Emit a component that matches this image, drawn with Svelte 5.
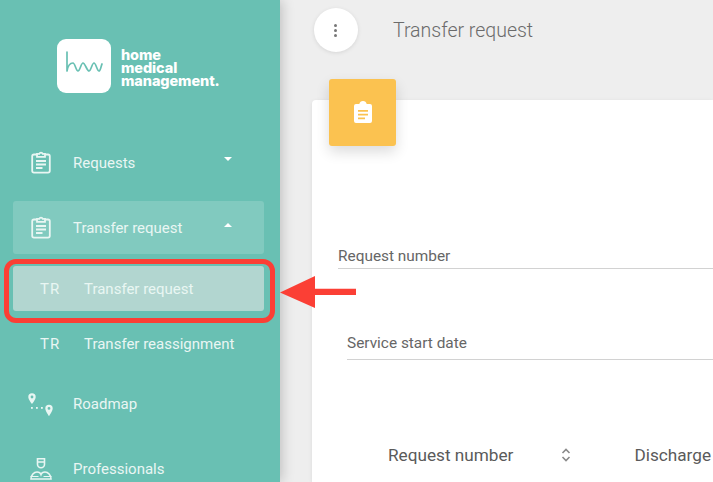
<script>
	const clipboard = 'M6 3.500H3A1.800 1.800 0 0 0 1.200 5.300v14.500A1.800 1.800 0 0 0 3 21.600h14a1.800 1.800 0 0 0 1.800-1.800V5.300A1.800 1.800 0 0 0 17 3.500h-3M6 2.800h2.300a1.800 1.800 0 0 1 3.400 0H14v3H6zM5 10h10M5 13.500h10M5 17h6.500';
</script>

<div class="page">
	<aside class="sidebar">
		<div class="brand">
			<div class="brand-mark">
				<svg width="40" height="30" viewBox="0 0 40 30" fill="none" stroke="#69c0b3" stroke-width="1.700" stroke-linecap="round" stroke-linejoin="round">
					<path d="M3 1v19C4 14 7 12 9 12c2 0 3 8 5 8s3-8 5-8 4 8 6 8 3-8 5-8 3 8 5 8c1.500 0 2-5 3-7" />
				</svg>
			</div>
			<div class="brand-name">home<br />medical<br />management.</div>
		</div>

		<nav class="menu">
			<div class="item item-requests">
				<span class="icon">
					<svg width="20" height="23" viewBox="0 0 20 23" fill="none" stroke="currentColor" stroke-width="1.800"><path d={clipboard} /></svg>
				</span>
				<span class="label">Requests</span>
				<span class="caret down"></span>
			</div>

			<div class="item open">
				<span class="icon">
					<svg width="20" height="23" viewBox="0 0 20 23" fill="none" stroke="currentColor" stroke-width="1.800"><path d={clipboard} /></svg>
				</span>
				<span class="label">Transfer request</span>
				<span class="caret up"></span>
			</div>

			<div class="sub active"><span class="abbr">TR</span><span>Transfer request</span></div>
			<div class="sub second"><span class="abbr">TR</span><span>Transfer reassignment</span></div>

			<div class="item item-roadmap">
				<span class="icon">
					<svg width="26" height="26" viewBox="0 0 26 26" fill="currentColor">
						<path fill-rule="evenodd" d="M4 2.300A3.700 3.700 0 0 1 7.700 6C7.700 8.500 4 13 4 13S.3 8.500.3 6A3.700 3.700 0 0 1 4 2.300zm0 2.300a1.400 1.400 0 1 0 0 2.800 1.400 1.400 0 0 0 0-2.800z" />
						<path fill-rule="evenodd" d="M21 13.700a3.700 3.700 0 0 1 3.700 3.700C24.700 19.900 21 25 21 25s-3.700-5.100-3.700-7.600A3.700 3.700 0 0 1 21 13.700zm0 2.300a1.400 1.400 0 1 0 0 2.800 1.400 1.400 0 0 0 0-2.800z" />
						<rect x="3" y="16" width="1.800" height="1.800" /><rect x="8" y="16" width="1.800" height="1.800" /><rect x="13" y="16" width="1.800" height="1.800" />
					</svg>
				</span>
				<span class="label">Roadmap</span>
			</div>

			<div class="item item-pros">
				<span class="icon">
					<svg width="26" height="26" viewBox="0 0 26 26" fill="none" stroke="currentColor" stroke-width="1.600">
						<path d="M9.500 2.800h7v5.400a3.500 3.500 0 0 1-7 0zM9.500 6h7" />
						<path d="M3 23c0-4 3-7 6-7 2 0 3.500 1 4 2.500.5-1.500 2-2.500 4-2.500 3 0 6 3 6 7z" />
						<path d="M2.500 20.500h8M15.500 20.500h8" stroke-width="1.200" />
					</svg>
				</span>
				<span class="label">Professionals</span>
			</div>
		</nav>
	</aside>

	<main class="main">
		<header class="topbar">
			<div class="more"><i></i><i></i><i></i></div>
			<h1>Transfer request</h1>
		</header>

		<section class="card">
			<div class="tile">
				<svg width="20" height="23" viewBox="0 0 20 23" fill="#fff">
					<path fill-rule="evenodd" d="M3 3h3.300a3.800 3.800 0 0 1 7.400 0H17a2 2 0 0 1 2 2v15a2 2 0 0 1-2 2H3a2 2 0 0 1-2-2V5a2 2 0 0 1 2-2zM5 9v1.800h10V9zm0 3.700v1.800h10v-1.800zm0 3.700v1.800h7v-1.800z" />
				</svg>
			</div>

			<div class="field field-request">Request number</div>
			<div class="field field-date">Service start date</div>

			<div class="thead">
				<span class="col-request">Request number</span>
				<svg class="sort" width="10" height="16" viewBox="0 0 10 16" fill="none" stroke="#8a8a8a" stroke-width="1.600"><path d="M1.500 6 5 2.500 8.500 6M1.500 10 5 13.500 8.500 10" /></svg>
				<span class="col-discharge">Discharge</span>
			</div>
		</section>
	</main>

	<!-- annotation drawn over the screenshot -->
	<div class="callout"></div>
	<svg class="arrow" width="76" height="32" viewBox="0 0 76 32">
		<path d="M0 16.500 35 0v12.700h41V19H35v13z" fill="#fb3f35" />
	</svg>
</div>

<style>
	:global(body) {
		margin: 0;
	}

	.page {
		position: relative;
		display: flex;
		width: 713px;
		height: 482px;
		overflow: hidden;
		background: #eeeeee;
		font-family: Roboto, "Liberation Sans", sans-serif;
	}

	/* Sidebar */
	.sidebar {
		flex: 0 0 280px;
		padding-top: 39px;
		box-sizing: border-box;
		background: #69c0b3;
		color: #e9f6f3;
		box-shadow: 2px 0 12px rgba(0, 0, 0, 0.2);
		z-index: 1;
	}

	.brand {
		display: flex;
		align-items: center;
		gap: 10px;
		padding-left: 57px;
	}

	.brand-mark {
		display: flex;
		align-items: center;
		justify-content: center;
		width: 54px;
		height: 54px;
		border-radius: 9px;
		background: #ffffff;
	}

	.brand-name {
		padding-top: 3px;
		font-family: Inter, "Liberation Sans", sans-serif;
		font-size: 14.500px;
		font-weight: 800;
		line-height: 13px;
		letter-spacing: -0.1px;
		color: #ffffff;
	}

	.menu {
		display: flex;
		flex-direction: column;
		margin-top: 41px;
	}

	.item {
		display: flex;
		align-items: center;
		flex: none;
		height: 53px;
		margin: 0 16px 0 13px;
		padding-left: 15px;
		border-radius: 3px;
		font-size: 15px;
		font-weight: 400;
		position: relative;
	}

	.item-requests {
		margin-top: 2px;
		margin-bottom: 12px;
	}

	.open {
		background: rgba(255, 255, 255, 0.16);
	}

	.icon {
		display: flex;
		align-items: center;
		justify-content: center;
		flex: 0 0 26px;
		height: 26px;
	}

	.label {
		margin-left: 19px;
	}

	.caret {
		position: absolute;
		left: 211px;
		width: 0;
		height: 0;
		border-left: 4px solid transparent;
		border-right: 4px solid transparent;
	}

	.caret.down {
		top: 21px;
		border-top: 4px solid #ffffff;
	}

	.caret.up {
		top: 22px;
		border-bottom: 4px solid #ffffff;
	}

	.sub {
		display: flex;
		align-items: center;
		flex: none;
		height: 45px;
		margin: 12px 16px 0 13px;
		padding-left: 27px;
		border-radius: 3px;
		box-sizing: border-box;
		font-size: 15px;
	}

	.abbr {
		width: 44px;
		letter-spacing: 1px;
	}

	.active {
		background: #b2d6d0;
	}

	.second {
		margin-top: 10px;
	}

	.item-roadmap {
		margin-top: 11px;
	}

	.item-pros {
		margin-top: 12px;
	}

	/* Main */
	.main {
		flex: 1;
		min-width: 0;
		display: flex;
		flex-direction: column;
		padding-top: 8px;
	}

	.topbar {
		display: flex;
		align-items: center;
		height: 44px;
		padding-left: 34px;
	}

	.more {
		display: flex;
		flex-direction: column;
		align-items: center;
		justify-content: center;
		gap: 2px;
		width: 44px;
		height: 44px;
		border-radius: 50%;
		background: #ffffff;
		box-shadow: 0 1px 4px rgba(0, 0, 0, 0.1);
	}

	.more i {
		width: 3px;
		height: 3px;
		border-radius: 50%;
		background: #777777;
		transform: translateX(-1px);
	}

	h1 {
		margin: 0 0 0 35px;
		font-size: 19.500px;
		font-weight: 300;
		color: #6b6b6b;
	}

	.card {
		position: relative;
		flex: 1;
		margin: 48px 0 0 32px;
		padding: 0 0 0 26px;
		border-radius: 4px 0 0 0;
		background: #ffffff;
		box-shadow: 0 1px 4px rgba(0, 0, 0, 0.08);
	}

	.tile {
		position: absolute;
		left: 17px;
		top: -21px;
		display: flex;
		align-items: center;
		justify-content: center;
		width: 67px;
		height: 67px;
		border-radius: 3px;
		background: #fbc250;
		box-shadow: 0 6px 14px rgba(0, 0, 0, 0.14);
	}

	.field {
		height: 21px;
		font-size: 15.400px;
		font-weight: 400;
		color: #666666;
		border-bottom: 1px solid #d2d2d2;
	}

	.field-request {
		padding-top: 147px;
	}

	.field-date {
		margin: 65px 0 0 9px;
		height: 25px;
	}

	.thead {
		display: flex;
		align-items: center;
		height: 20px;
		margin-top: 85px;
		padding-left: 50px;
		font-size: 17.200px;
		font-weight: 400;
		color: #5a5a5a;
		white-space: nowrap;
	}

	.sort {
		margin-left: 48px;
	}

	.col-discharge {
		margin-left: 63px;
	}

	/* Annotation */
	.callout {
		position: absolute;
		left: 4px;
		top: 259px;
		width: 261px;
		height: 54px;
		border: 5px solid #fb3f35;
		border-radius: 12px;
		z-index: 2;
	}

	.arrow {
		position: absolute;
		left: 280px;
		top: 276px;
		z-index: 2;
	}
</style>
